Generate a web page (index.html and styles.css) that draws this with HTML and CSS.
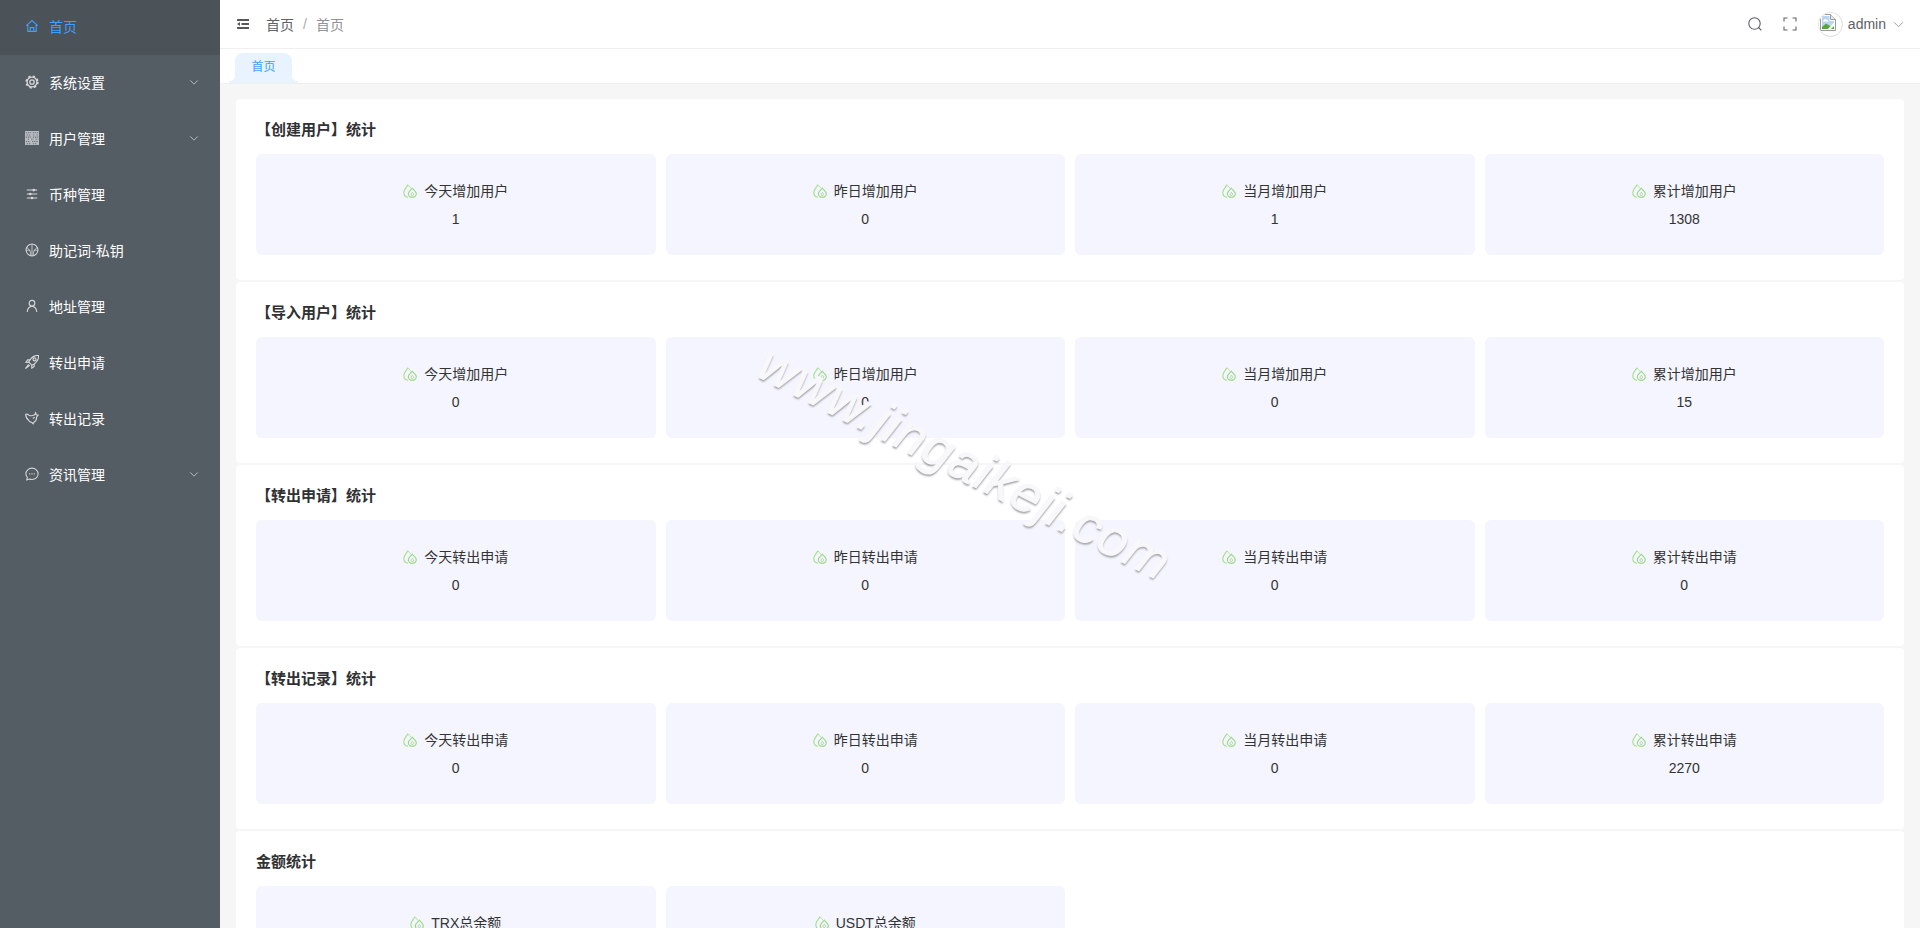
FILE: index.html
```html
<!DOCTYPE html>
<html lang="zh-CN">
<head>
<meta charset="utf-8">
<title>首页</title>
<link rel="stylesheet" href="styles.css">
</head>
<body>
<svg class="defs" width="0" height="0">
  <symbol id="drop" viewBox="0 0 14 14">
    <path d="M5 .7C3.600 3.100.8 5.400.8 8.600c0 2.500 1.800 4.400 4.200 4.600" fill="none" stroke="#a5e08a" stroke-width="1.100"/>
    <path d="M5 .7C5.900 2.100 7.200 3.300 8.300 4.600" fill="none" stroke="#b5e29d" stroke-width="1"/>
    <path d="M9.300 4.300c-1.300 1.900-4 3.200-4 5.400 0 2 1.800 3.600 4 3.600s4-1.600 4-3.600c0-2.200-2.700-3.500-4-5.400z" fill="none" stroke="#93d97c" stroke-width="1.100"/>
    <path d="M9.300 8.300c-.6.800-1.300 1.300-1.300 2.100 0 .7.600 1.200 1.300 1.200s1.300-.5 1.300-1.200c0-.8-.7-1.300-1.300-2.100z" fill="none" stroke="#a9c98f" stroke-width=".8"/>
  </symbol>
</svg>
<div class="app">
  <aside class="sidebar">
    <a class="menu-item active">
      <svg class="mi" viewBox="0 0 16 16"><path d="M1.500 7.600 8 1.800l6.500 5.800M3.200 6.200v8h9.600v-8M6 14.200V9.800h4v4.400" stroke-width="1.300"/></svg>
      <span class="ml">首页</span>
    </a>
    <a class="menu-item">
      <svg class="mi" viewBox="0 0 16 16"><circle cx="8" cy="8" r="5.600" stroke-width="1.500"/><circle class="teeth" cx="8" cy="8" r="6.600"/><circle cx="8" cy="8" r="2.500" stroke-width="1.500"/></svg>
      <span class="ml">系统设置</span>
      <svg class="arrow" viewBox="0 0 12 8"><path d="M1.500 1.500 6 6l4.500-4.500"/></svg>
    </a>
    <a class="menu-item">
      <svg class="mi" viewBox="0 0 16 16"><path class="dots" d="M0 0h16v16H0z"/><path class="dots2" d="M1 2h6M9 2h6M2 4.500h4M9 4.500h2M13 4.500h2M1 7h6M9 7h6M3 9.500h2M7 9.500h3M12 9.500h3M1 12h5M8 12h7M2 14.500h5M9 14.500h5"/></svg>
      <span class="ml">用户管理</span>
      <svg class="arrow" viewBox="0 0 12 8"><path d="M1.500 1.500 6 6l4.500-4.500"/></svg>
    </a>
    <a class="menu-item">
      <svg class="mi" viewBox="0 0 16 16"><path d="M2 3.500h12M2 8h12M2 12.500h12" stroke-width="1.200"/><circle class="knob" cx="10" cy="3.500" r="1.500"/><circle class="knob" cx="6" cy="8" r="1.500"/><circle class="knob" cx="8" cy="12.500" r="1.500"/></svg>
      <span class="ml">币种管理</span>
    </a>
    <a class="menu-item">
      <svg class="mi" viewBox="0 0 16 16"><circle cx="8" cy="8" r="6.800" stroke-width="1.200"/><path d="M8 1.500v13M2.200 5.200C5 7 6.500 9.500 6.700 14.300M13.800 5.200C11 7 9.500 9.500 9.300 14.300M1.500 8.600c2-.6 3.500-.3 4.600.6M14.500 8.600c-2-.6-3.500-.3-4.600.6"/></svg>
      <span class="ml">助记词-私钥</span>
    </a>
    <a class="menu-item">
      <svg class="mi" viewBox="0 0 16 16"><circle cx="8" cy="4.800" r="3.200" stroke-width="1.300"/><path d="M2.500 14.800C3 10.800 5 8.400 8 8.400s5 2.400 5.500 6.400" stroke-width="1.300"/></svg>
      <span class="ml">地址管理</span>
    </a>
    <a class="menu-item">
      <svg class="mi" viewBox="0 0 16 16"><path d="M15.500.5c-4.300-.2-7.500 1.300-10 5.500L4.200 8 8 11.800l2-1.300c4.200-2.500 5.700-5.700 5.500-10zM5.500 5.500H3L1 8.200l3 .2M10.500 10.500V13l-2.700 2-.2-3M4.200 10.600.5 15.500l4.900-3.700M10.800 3.300a1.700 1.700 0 1 0 .1 0" stroke-width="1.300"/></svg>
      <span class="ml">转出申请</span>
    </a>
    <a class="menu-item">
      <svg class="mi" viewBox="0 0 16 16"><path d="M.8 3.800c1.800-.5 3.200.2 4.200 1.400 2 .5 4 .2 6-.8l1.200-2.400.6 2.300 2.200.5-1.700 2c0 3-1 5-3 6l-1 1.800-1.700-1.600c-2 0-3-1-3.500-2.500C2.500 9.500.8 7.300.8 3.800zM9 8.500l2-1.500" stroke-width="1.300"/></svg>
      <span class="ml">转出记录</span>
    </a>
    <a class="menu-item">
      <svg class="mi" viewBox="0 0 16 16"><path d="M8 1.300c3.900 0 7 2.800 7 6.500s-3.100 6.500-7 6.500c-1.100 0-2.100-.2-3-.6l-3 1 .7-2.800C1.600 11 1 9.500 1 7.800c0-3.700 3.100-6.500 7-6.500z" stroke-width="1.200"/><path class="dotted" d="M4.800 7.800h1.200M7.400 7.800h1.200M10 7.800h1.200"/></svg>
      <span class="ml">资讯管理</span>
      <svg class="arrow" viewBox="0 0 12 8"><path d="M1.500 1.500 6 6l4.500-4.500"/></svg>
    </a>
  </aside>
  <div class="main">
    <header class="navbar">
      <div class="nav-left">
        <svg class="fold" viewBox="0 0 12 10"><path d="M0 1h12M4.500 5H12M0 9h12"/><path class="fold-tip" d="M0 5l3-2v4z"/></svg>
        <nav class="crumbs"><span class="c1">首页</span><span class="sep">/</span><span class="c2">首页</span></nav>
      </div>
      <div class="nav-right">
        <svg class="tool" viewBox="0 0 14 14"><circle cx="6.500" cy="6.500" r="5.700"/><path d="m10.500 10.500 2.800 2.800"/></svg>
        <svg class="tool screen" viewBox="0 0 14 14"><path d="M1 4.500V1h3.500M9.500 1H13v3.500M13 9.500V13H9.500M4.500 13H1V9.500"/></svg>
        <div class="user">
          <span class="avatar">
            <svg class="broken" viewBox="0 0 16 17">
              <path d="M.5.500h10l5 5v11H.5z" fill="#fff" stroke="#9a9a9a"/>
              <path d="M10.500.500v5h5" fill="#e8e8e8" stroke="#9a9a9a"/>
              <path d="M2 2h7.500v5H14v8H2z" fill="#bcd6f2"/>
              <path d="M3 7c1-2 3-2.200 4.500-.8l1 1.300H3z" fill="#fff"/>
              <path d="M2 15v-2l4-3.500 5 3-3 2.500z" fill="#57a636"/>
              <path d="M8 15l6-6.500V15z" fill="#fff"/>
              <path d="M11 15l3-3v3z" fill="#57a636"/>
            </svg>
          </span>
          <span class="uname">admin</span>
          <svg class="caret" viewBox="0 0 12 8"><path d="M1 1.500 6 6.500l5-5"/></svg>
        </div>
      </div>
    </header>
    <div class="tabs"><span class="tab">首页</span></div>
    <main class="content">
      <section class="card">
        <h3 class="card-title">【创建用户】统计</h3>
        <div class="stats">
          <div class="stat"><div class="stat-name"><svg class="drop"><use href="#drop"/></svg>今天增加用户</div><div class="stat-val">1</div></div>
          <div class="stat"><div class="stat-name"><svg class="drop"><use href="#drop"/></svg>昨日增加用户</div><div class="stat-val">0</div></div>
          <div class="stat"><div class="stat-name"><svg class="drop"><use href="#drop"/></svg>当月增加用户</div><div class="stat-val">1</div></div>
          <div class="stat"><div class="stat-name"><svg class="drop"><use href="#drop"/></svg>累计增加用户</div><div class="stat-val">1308</div></div>
        </div>
      </section>
      <section class="card">
        <h3 class="card-title">【导入用户】统计</h3>
        <div class="stats">
          <div class="stat"><div class="stat-name"><svg class="drop"><use href="#drop"/></svg>今天增加用户</div><div class="stat-val">0</div></div>
          <div class="stat"><div class="stat-name"><svg class="drop"><use href="#drop"/></svg>昨日增加用户</div><div class="stat-val">0</div></div>
          <div class="stat"><div class="stat-name"><svg class="drop"><use href="#drop"/></svg>当月增加用户</div><div class="stat-val">0</div></div>
          <div class="stat"><div class="stat-name"><svg class="drop"><use href="#drop"/></svg>累计增加用户</div><div class="stat-val">15</div></div>
        </div>
      </section>
      <section class="card">
        <h3 class="card-title">【转出申请】统计</h3>
        <div class="stats">
          <div class="stat"><div class="stat-name"><svg class="drop"><use href="#drop"/></svg>今天转出申请</div><div class="stat-val">0</div></div>
          <div class="stat"><div class="stat-name"><svg class="drop"><use href="#drop"/></svg>昨日转出申请</div><div class="stat-val">0</div></div>
          <div class="stat"><div class="stat-name"><svg class="drop"><use href="#drop"/></svg>当月转出申请</div><div class="stat-val">0</div></div>
          <div class="stat"><div class="stat-name"><svg class="drop"><use href="#drop"/></svg>累计转出申请</div><div class="stat-val">0</div></div>
        </div>
      </section>
      <section class="card">
        <h3 class="card-title">【转出记录】统计</h3>
        <div class="stats">
          <div class="stat"><div class="stat-name"><svg class="drop"><use href="#drop"/></svg>今天转出申请</div><div class="stat-val">0</div></div>
          <div class="stat"><div class="stat-name"><svg class="drop"><use href="#drop"/></svg>昨日转出申请</div><div class="stat-val">0</div></div>
          <div class="stat"><div class="stat-name"><svg class="drop"><use href="#drop"/></svg>当月转出申请</div><div class="stat-val">0</div></div>
          <div class="stat"><div class="stat-name"><svg class="drop"><use href="#drop"/></svg>累计转出申请</div><div class="stat-val">2270</div></div>
        </div>
      </section>
      <section class="card">
        <h3 class="card-title">金额统计</h3>
        <div class="stats">
          <div class="stat"><div class="stat-name"><svg class="drop"><use href="#drop"/></svg>TRX总余额</div><div class="stat-val">0</div></div>
          <div class="stat"><div class="stat-name"><svg class="drop"><use href="#drop"/></svg>USDT总余额</div><div class="stat-val">0</div></div>
        </div>
      </section>
    </main>
  </div>
</div>
<div class="watermark">www.jingaikeji.com</div>
</body>
</html>
```
FILE: styles.css
```css
* { box-sizing: border-box; }
html, body { margin: 0; height: 100%; overflow: hidden; }
body {
  font-family: "Liberation Sans", "Noto Sans CJK SC", sans-serif;
  font-size: 14px;
  color: #333;
  background: #fff;
}
.defs { position: absolute; }
.app { display: flex; height: 928px; }

.sidebar {
  width: 220px;
  flex: none;
  background: #545c64;
  margin-top: -1px;
  height: 929px;
}
.menu-item {
  display: flex;
  align-items: center;
  height: 56px;
  padding: 0 21px 2px 25px;
  color: #fff;
}
.menu-item.active { background: #4b5258; color: #409eff; }
.mi {
  width: 14px;
  height: 14px;
  margin-right: 10px;
  flex: none;
  fill: none;
  stroke: #d5d7d9;
  stroke-width: 1;
}
.active .mi { stroke: #409eff; }
.mi .teeth { stroke-width: 2; stroke-dasharray: 2.600 2.600; }
.mi .dots { fill: #b9bbc2; stroke: none; }
.mi .dots2 { stroke: #6b6f76; stroke-width: 1.200; stroke-dasharray: 1.500 1; }
.mi .knob { fill: #d5d7d9; stroke: none; }
.mi .dotted { stroke-width: 1.300; }
.ml { flex: 1; }
.arrow {
  width: 10px;
  height: 7px;
  fill: none;
  stroke: #c8cbce;
  stroke-width: 1;
}

.main { flex: 1; min-width: 0; display: flex; flex-direction: column; }
.navbar {
  height: 49px;
  flex: none;
  border-bottom: 1px solid #f0f0f0;
  display: flex;
  align-items: center;
  justify-content: space-between;
  padding: 0 16px 0 17px;
  background: #fff;
}
.nav-left { display: flex; align-items: center; }
.fold { width: 12px; height: 10px; fill: none; stroke: #55585c; stroke-width: 2; margin-right: 17px; }
.fold-tip { fill: #55585c; stroke: none; }
.crumbs { display: flex; align-items: center; color: #97a8be; }
.c1 { color: #606266; }
.c2 { color: #909399; }
.sep { margin: 0 9px; color: #a8abb2; }
.nav-right { display: flex; align-items: center; }
.tool { width: 14px; height: 14px; fill: none; stroke: #606266; stroke-width: 1.100; margin-right: 21px; }
.user { display: flex; align-items: center; color: #5d6066; }
.avatar {
  width: 25px;
  height: 25px;
  border-radius: 50%;
  border: 1px solid #dcdcdc;
  overflow: hidden;
  display: flex;
  align-items: flex-start;
  justify-content: flex-start;
  margin-right: 5px;
}
.broken { width: 16px; height: 17px; margin-top: 1px; margin-left: 1px; flex: none; background: #fff; box-shadow: 0 0 0 3px #fff; }
.uname { margin-right: 7px; }
.caret { width: 11px; height: 7px; fill: none; stroke: #909399; stroke-width: 1; }

.tabs {
  height: 35px;
  flex: none;
  background: #fff;
  border-bottom: 1px solid #f0f0f0;
  padding-left: 15px;
  padding-top: 4px;
  display: flex;
  align-items: flex-start;
}
.tab {
  position: relative;
  width: 57px;
  height: 30px;
  background: #e9f3ff;
  color: #409eff;
  font-size: 12px;
  line-height: 29px;
  text-align: center;
  border-radius: 8px 8px 0 0;
}
.tab::before,
.tab::after {
  content: "";
  position: absolute;
  bottom: 0;
  width: 6px;
  height: 8px;
}
.tab::before { left: -6px; background: radial-gradient(circle at 0 0, transparent 6px, #e9f3ff 6.500px); }
.tab::after { right: -6px; background: radial-gradient(circle at 100% 0, transparent 6px, #e9f3ff 6.500px); }
.content {
  flex: 1;
  background: #f6f6f6;
  padding: 15px 16px 0;
  overflow: hidden;
}
.card {
  background: #fff;
  border-radius: 4px;
  padding: 20px;
  height: 181px;
  margin-bottom: 2px;
}
.card-title {
  margin: 0 0 13px;
  font-size: 15px;
  font-weight: 700;
  line-height: 22px;
  color: #303133;
}
.stats { display: grid; grid-template-columns: repeat(4, 1fr); gap: 10px; }
.stat {
  background: #f4f5fe;
  border-radius: 6px;
  height: 101px;
  display: flex;
  flex-direction: column;
  align-items: center;
  padding-top: 27px;
}
.stat-name { display: flex; align-items: center; line-height: 20px; color: #333; }
.drop { width: 14px; height: 14px; margin-right: 7px; flex: none; }
.stat-val { margin-top: 8px; line-height: 20px; color: #333; }

.watermark {
  position: absolute;
  left: 738px;
  top: 432px;
  font-family: "Liberation Sans", sans-serif;
  font-style: italic;
  font-size: 52px;
  letter-spacing: 1px;
  line-height: 60px;
  color: #f8f8fb;
  -webkit-text-stroke: 1px #f8f8fb;
  text-shadow: 1px 2px 2px #a2a2a6;
  transform: rotate(27deg);
  white-space: nowrap;
  pointer-events: none;
}
```
